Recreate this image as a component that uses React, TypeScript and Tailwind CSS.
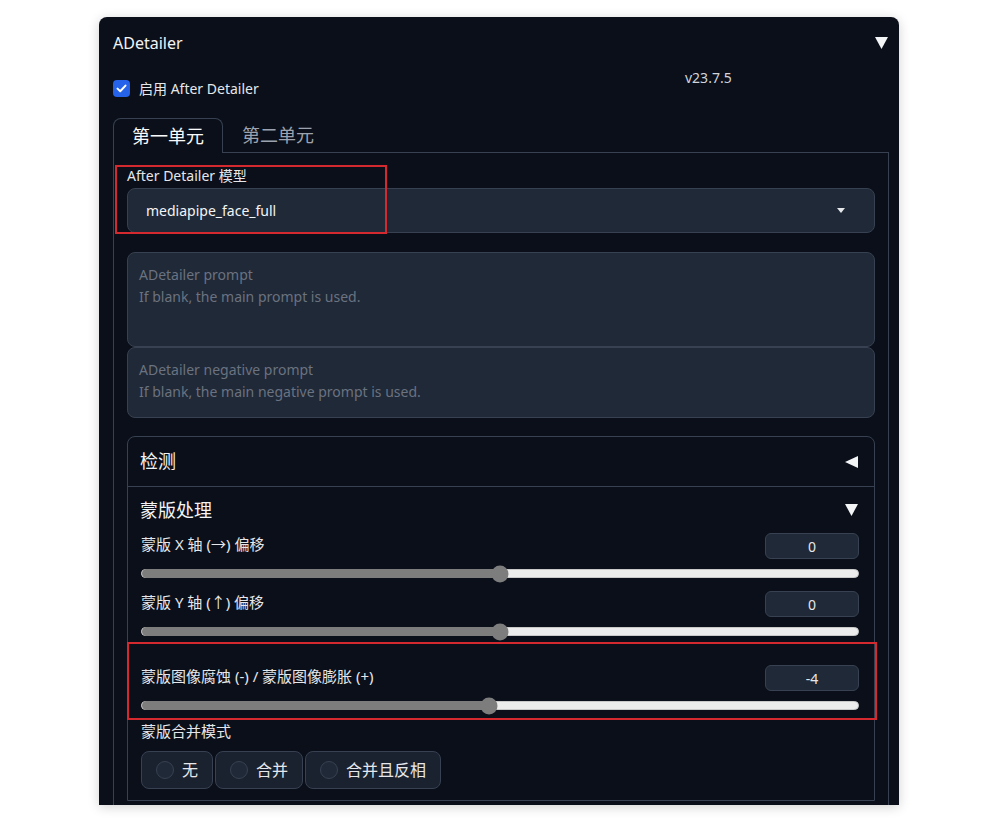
import React from "react";

function Tri({ dir = "down" }: { dir?: "down" | "left" }) {
  return (
    <svg width="13" height="12" viewBox="0 0 13 12" className="shrink-0">
      {dir === "down" ? (
        <polygon points="0,0 13,0 6.5,12" fill="#f3f4f6" />
      ) : (
        <polygon points="13,0 13,12 0,6" fill="#f3f4f6" />
      )}
    </svg>
  );
}

function Slider({ label, value, pct }: { label: string; value: string; pct: number }) {
  return (
    <div>
      <div className="flex items-start justify-between h-[27px]">
        <span className="mt-[1px] text-[15px] leading-[20px] text-[#e5e7eb]">{label}</span>
        <div className="w-[94px] h-[26px] rounded-[6px] bg-[#1f2937] border border-[#374151] flex items-center justify-center text-[14px] text-[#e5e7eb]">
          {value}
        </div>
      </div>
      <div className="relative mt-[9px] h-[9px] rounded-full bg-[#ececec] border border-[#c9c9c9]">
        <div className="absolute left-0 top-[-1px] h-[9px] rounded-full bg-[#7d7d7d]" style={{ width: `${pct}%` }} />
        <div
          className="absolute top-1/2 w-[17px] h-[17px] -translate-x-1/2 -translate-y-1/2 rounded-full bg-[#7d7d7d]"
          style={{ left: `${pct}%` }}
        />
      </div>
    </div>
  );
}

function Radio({ label }: { label: string }) {
  return (
    <div className="h-[38px] flex items-center gap-[8px] pl-[14px] pr-[14px] rounded-[8px] border border-[#374151] bg-[#1a2230] text-[16px] text-[#e5e7eb]">
      <span className="w-[18px] h-[18px] rounded-full bg-[#1f2937] border border-[#374151]" />
      {label}
    </div>
  );
}

export default function App() {
  return (
    <div className="min-h-[823px] bg-white pt-[17px] font-['Noto_Sans','Noto_Sans_CJK_SC',sans-serif]">
      <div className="relative ml-[99px] w-[800px] h-[788px] overflow-hidden rounded-t-lg bg-[#0b0f19] pl-[14px] pr-[10px] shadow-[0_2px_12px_rgba(0,0,0,0.18)]">
        {/* header */}
        <div className="h-[50px] flex items-center justify-between pr-[1px] pt-[2px]">
          <span className="text-[16px] text-[#f3f4f6]">ADetailer</span>
          <Tri />
        </div>

        {/* enable row */}
        <div className="h-[51px] flex items-start">
          <label className="mt-[12px] flex items-center gap-[9px] h-[18px] w-[388px]">
            <span className="w-[17px] h-[17px] rounded-[4px] bg-[#2563eb] flex items-center justify-center">
              <svg width="11" height="9" viewBox="0 0 11 9">
                <path d="M1.5 4.6 L4.2 7.2 L9.5 1.6" fill="none" stroke="white" strokeWidth="2" strokeLinecap="round" strokeLinejoin="round" />
              </svg>
            </span>
            <span className="text-[14px] text-[#e5e7eb]">启用 After Detailer</span>
          </label>
          <span className="mt-[1px] ml-[184px] text-[14px] leading-[20px] text-[#d1d5db]">v23.7.5</span>
        </div>

        {/* tabs */}
        <div className="flex h-[35px]">
          <div className="w-[110px] rounded-t-lg border border-b-0 border-[#374151] flex items-center justify-center text-[18px] text-[#f9fafb]">
            第一单元
          </div>
          <div className="w-[110px] border-b border-[#374151] flex items-center justify-center text-[18px] text-[#9ca3af]">
            第二单元
          </div>
          <div className="flex-1 border-b border-[#374151]" />
        </div>

        {/* tab panel */}
        <div className="border-x border-b border-[#374151] pl-[13px] pr-[13px] pt-[13px] pb-[20px]">
          <div className="text-[14px] leading-[20px] text-[#e5e7eb]">After Detailer 模型</div>
          <div className="mt-[2px] h-[45px] rounded-[8px] bg-[#1f2937] border border-[#374151] flex items-center justify-between pl-[18px] pr-[29px]">
            <span className="text-[14px] text-[#f3f4f6]">mediapipe_face_full</span>
            <svg width="8" height="5" viewBox="0 0 8 5">
              <polygon points="0,0 8,0 4,5" fill="#e5e7eb" />
            </svg>
          </div>

          <div className="mt-[19px] h-[95px] rounded-[8px] bg-[#1f2937] border border-[#374151] px-[11px] pt-[11px] text-[14px] leading-[22px] text-[#6b7280]">
            <div>ADetailer prompt</div>
            <div>If blank, the main prompt is used.</div>
          </div>
          <div className="h-[71px] rounded-[8px] bg-[#1f2937] border border-[#374151] px-[11px] pt-[11px] text-[14px] leading-[22px] text-[#6b7280]">
            <div>ADetailer negative prompt</div>
            <div>If blank, the main negative prompt is used.</div>
          </div>

          {/* accordion */}
          <div className="mt-[18px] rounded-t-[8px] border border-[#374151]">
            <div className="h-[50px] border-b border-[#374151] flex items-center justify-between pl-[12px] pr-[16px] text-[18px] text-[#f3f4f6]">
              检测
              <Tri dir="left" />
            </div>
            <div className="pl-[13px] pr-[15px] pb-[11px]">
              <div className="h-[46px] flex items-center justify-between pr-[1px] text-[18px] text-[#f3f4f6] -ml-[1px]">
                蒙版处理
                <Tri />
              </div>
              <Slider label="蒙版 X 轴 (→) 偏移" value="0" pct={50} />
              <div className="mt-[13px]">
                <Slider label="蒙版 Y 轴 (↑) 偏移" value="0" pct={50} />
              </div>
              <div className="mt-[29px]">
                <Slider label="蒙版图像腐蚀 (-) / 蒙版图像膨胀 (+)" value="-4" pct={48.5} />
              </div>
              <div className="mt-[11px] text-[15px] leading-[20px] text-[#e5e7eb]">蒙版合并模式</div>
              <div className="mt-[10px] flex gap-[2px]">
                <Radio label="无" />
                <Radio label="合并" />
                <Radio label="合并且反相" />
              </div>
            </div>
          </div>
        </div>

        {/* annotation boxes */}
        <div className="absolute left-[16px] top-[148px] w-[272px] h-[69px] border-2 border-[#d42a2f] pointer-events-none" />
        <div className="absolute left-[28px] top-[625px] w-[750px] h-[78px] border-2 border-[#d42a2f] pointer-events-none" />
      </div>
    </div>
  );
}
